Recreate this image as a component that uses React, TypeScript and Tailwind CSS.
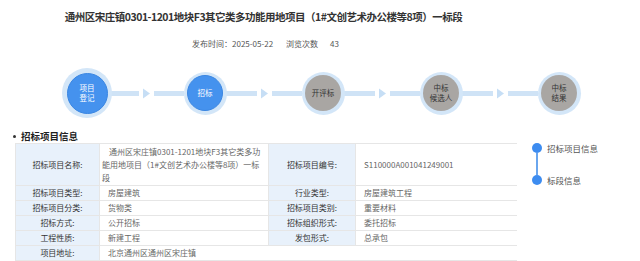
import React from "react";

const FONT = '"Noto Sans CJK SC", "Noto Sans", sans-serif';

function Step({ label, active, big }: { label: string[]; active?: boolean; big?: boolean }) {
  const halo = big ? "w-[50px] h-[50px]" : "w-[43px] h-[43px]";
  const inner = big ? "w-[41px] h-[41px]" : "w-[36px] h-[36px]";
  return (
    <div className="relative z-10 w-[50px] h-[50px] flex items-center justify-center shrink-0">
      <div className={`${halo} rounded-full bg-[#d3e6f8] flex items-center justify-center`}>
        <div
          className={`${inner} rounded-full flex flex-col items-center justify-center text-[7.5px] leading-[10px] ${
            active ? "bg-[#4592ee] border border-[#3a86e2] text-white" : "bg-[#a9a6a3] text-[#333]"
          }`}
        >
          {label.map((l) => (
            <span key={l} className="block leading-[10px]">{l}</span>
          ))}
        </div>
      </div>
    </div>
  );
}

function Connector() {
  return (
    <div className="w-[76px] -mx-[4px] shrink-0 flex items-center">
      <div className="flex-1 h-[5px] bg-[#cfe3f6]" />
      <svg width="9" height="11" viewBox="0 0 9 11" className="mx-[3px] shrink-0">
        <polygon points="1,0.5 8,5.5 1,10.5" fill="#c6def5" />
      </svg>
      <div className="flex-1 h-[5px] bg-[#cfe3f6]" />
    </div>
  );
}

const L = "bg-[#e8f1fb] text-[#333] text-[8px] flex items-center justify-center";
const V = "bg-white text-[#666] text-[8px] flex items-center pl-[8px]";

export default function App() {
  return (
    <div className="w-[640px] h-[261px] overflow-hidden bg-white flex" style={{ fontFamily: FONT }}>
      <main className="w-[527px] shrink-0 flex flex-col">
        <h1 className="pt-[10px] text-center text-[10.5px] leading-[14px] font-bold text-[#333] tracking-[-0.5px]">
          通州区宋庄镇0301-1201地块F3其它类多功能用地项目（1#文创艺术办公楼等8项）一标段
        </h1>
        <div className="mt-[14px] flex justify-center text-[8px] leading-[12px] text-[#555] pl-[4px]">
          <span>发布时间：2025-05-22</span>
          <span className="ml-[13px]">浏览次数</span>
          <span className="ml-[12px]">43</span>
        </div>
        <div className="mt-[6px] mx-[13px] h-px bg-[#ececec]" />
        <div className="mt-[12px] h-[50px] flex items-center pl-[62px]">
          <Step label={["项目", "登记"]} active big />
          <Connector />
          <Step label={["招标"]} active />
          <Connector />
          <Step label={["开评标"]} />
          <Connector />
          <Step label={["中标", "候选人"]} />
          <Connector />
          <Step label={["中标", "结果"]} />
        </div>
        <div className="mt-[12px] ml-[13px] flex items-center text-[9.5px] leading-[12px] font-bold text-[#222]">
          <span className="w-[3px] h-[3px] rounded-full bg-[#333] mr-[5px]" />
          招标项目信息
        </div>
        <div className="mt-[1px] ml-[15px] w-[502px] grid grid-cols-[83px_168px_86px_163px] grid-rows-[41px_14px_14px_14px_14px_14px] gap-px bg-[#e6e6e6] p-px">
          <div className={L}>招标项目名称:</div>
          <div className="bg-white text-[#666] text-[8px] leading-[13px] pl-[2px] pr-[4px] flex items-center">
            <p className="indent-[7px]">通州区宋庄镇0301-1201地块F3其它类多功能用地项目（1#文创艺术办公楼等8项）一标段</p>
          </div>
          <div className={L}>招标项目编号:</div>
          <div className={V}>S110000A001041249001</div>

          <div className={L}>招标项目类型:</div>
          <div className={V}>房屋建筑</div>
          <div className={L}>行业类型:</div>
          <div className={V}>房屋建筑工程</div>

          <div className={L}>招标项目分类:</div>
          <div className={V}>货物类</div>
          <div className={L}>招标项目类别:</div>
          <div className={V}>重要材料</div>

          <div className={L}>招标方式:</div>
          <div className={V}>公开招标</div>
          <div className={L}>招标组织形式:</div>
          <div className={V}>委托招标</div>

          <div className={L}>工程性质:</div>
          <div className={V}>新建工程</div>
          <div className={L}>发包形式:</div>
          <div className={V}>总承包</div>

          <div className={L}>项目地址:</div>
          <div className={`${V} col-span-3`}>北京通州区通州区宋庄镇</div>
        </div>
      </main>
      <aside className="flex-1 pt-[143px] pl-[5px] text-[8.5px] leading-[10px] text-[#555]">
        <div className="flex items-center gap-[5px]">
          <span className="w-[10px] h-[10px] rounded-full bg-[#3d8cf0]" />
          <span>招标项目信息</span>
        </div>
        <div className="ml-[4px] w-[2px] h-[22px] bg-[#6aa6ee]" />
        <div className="flex items-center gap-[5px]">
          <span className="w-[10px] h-[10px] rounded-full bg-[#3d8cf0]" />
          <span>标段信息</span>
        </div>
      </aside>
    </div>
  );
}
